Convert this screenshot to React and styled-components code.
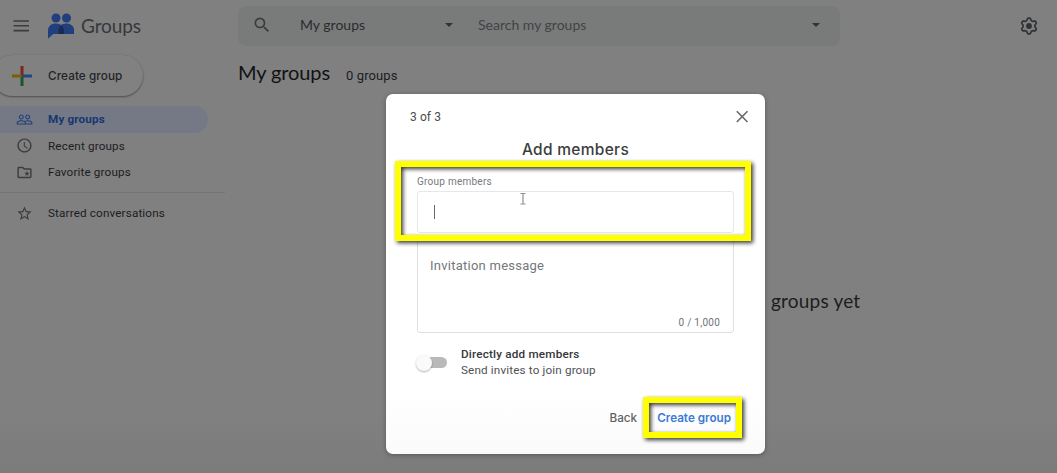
import React from "react";
import styled, { createGlobalStyle } from "styled-components";

const Global = createGlobalStyle`
  * { box-sizing: border-box; }
  html, body { margin: 0; padding: 0; overflow: hidden; background: #808080; }
  body { font-family: Roboto, "Liberation Sans", sans-serif; color: #202124; }
`;

const fonts = {
  display: `Lato, "Liberation Sans", sans-serif`,
  label: `Inter, "Liberation Sans", sans-serif`,
};

const Page = styled.div`
  position: relative;
  width: 1057px;
  height: 473px;
  overflow: hidden;
  display: flex;
  flex-direction: column;
  background: linear-gradient(#808080 88%, #7b7b7b);
`;

const Header = styled.header`
  flex: none;
  height: 51px;
  display: flex;
  align-items: center;
  padding: 0 18px 0 11px;
`;

const Icon = styled.svg`
  flex: none;
  display: block;
  width: ${(p) => p.$size}px;
  height: ${(p) => p.$h || p.$size}px;
  fill: ${(p) => p.$color || "#3a3c3f"};
`;

const Text = styled.span`
  display: block;
  white-space: nowrap;
  font-family: ${(p) => fonts[p.$face] || "inherit"};
  font-size: ${(p) => p.$size}px;
  line-height: ${(p) => p.$line || 20}px;
  font-weight: ${(p) => p.$weight || 400};
  letter-spacing: ${(p) => p.$track || 0}px;
  color: ${(p) => p.$color || "#1c1d1f"};
`;

const Brand = styled.div`
  width: 227px;
  display: flex;
  align-items: center;
`;

const Logo = styled(Icon)`
  margin: 0 7px 0 17px;
`;

const SearchBar = styled.div`
  width: 602px;
  height: 40px;
  border-radius: 8px;
  background: #797a7a;
  display: flex;
  align-items: center;
  padding: 0 14px 1px;
`;

const Scope = styled.div`
  width: 163px;
  margin: 0 15px 0 28px;
  display: flex;
  align-items: center;
  justify-content: space-between;
  padding-right: 10px;
`;

const Query = styled.div`
  flex: 1;
`;

const Caret = styled.i`
  border: 4px solid transparent;
  border-top-color: #303235;
  border-bottom: 0;
  margin-right: ${(p) => p.$right || 0}px;
`;

const Settings = styled.div`
  margin-left: auto;
`;

const Body = styled.div`
  flex: 1;
  display: flex;
`;

const Sidebar = styled.nav`
  width: 225px;
  padding-top: 4px;
`;

const ComposeButton = styled.div`
  width: 151px;
  height: 41px;
  margin: 0 0 10px -8px;
  border-radius: 21px;
  background: #818181;
  box-shadow: 0 1px 2px rgba(0, 0, 0, 0.38), 0 0 2px rgba(0, 0, 0, 0.08);
  display: flex;
  align-items: center;
  padding-left: 20px;
  gap: 16px;
`;

const NavItem = styled.div`
  width: 208px;
  height: 26.5px;
  border-radius: 0 14px 14px 0;
  background: ${(p) => (p.$active ? "#747985" : "transparent")};
  display: flex;
  align-items: center;
  padding-left: 16px;
  gap: 15px;
`;

const Divider = styled.div`
  height: 1px;
  margin: 6.500px 0 7px;
  background: #737474;
`;

const Main = styled.main`
  flex: 1;
  padding-left: 13px;
`;

const Heading = styled.div`
  display: flex;
  align-items: baseline;
  gap: 16px;
  padding-top: 8px;
`;

const Empty = styled.div`
  margin: 203px 0 0 533px;
`;

const Dialog = styled.section`
  position: absolute;
  left: 386px;
  top: 94px;
  width: 379px;
  height: 360px;
  border-radius: 7px;
  background: linear-gradient(#fff 82%, #fbfbfb);
  box-shadow: 0 1px 5px rgba(0, 0, 0, 0.3);
  padding: 14px 31px 0;
  display: flex;
  flex-direction: column;
`;

const DialogTop = styled.div`
  display: flex;
  align-items: center;
  justify-content: space-between;
  margin: 0 -15px 0 -7px;
  height: 18px;
`;

const DialogTitle = styled.div`
  display: flex;
  justify-content: center;
  margin: 14px 0 16px;
`;

const MemberInput = styled.div`
  height: 42px;
  margin-top: 3px;
  border: 1px solid #e6e7ea;
  border-radius: 3px;
  padding: 13px 16px;
`;

const InsertionPoint = styled.div`
  width: 1px;
  height: 14px;
  background: #66686b;
`;

const MessageBox = styled.div`
  height: 94px;
  margin-top: 6px;
  border: 1px solid #dfe0e3;
  border-radius: 3px;
  padding: 16px 13px 0 12px;
  display: flex;
  flex-direction: column;
  justify-content: space-between;
  align-items: flex-start;
`;

const Counter = styled.div`
  align-self: flex-end;
  margin-bottom: -1px;
`;

const SwitchRow = styled.div`
  display: flex;
  align-items: center;
  margin-top: 13px;
  gap: 14px;
`;

const Switch = styled.div`
  width: 30px;
  height: 17px;
  display: flex;
  align-items: center;
  &::before {
    content: "";
    width: 26px;
    height: 11px;
    margin-left: 4px;
    border-radius: 6px;
    background: #b9b9b9;
  }
  &::after {
    content: "";
    flex: none;
    width: 16px;
    height: 16px;
    margin-left: -31px;
    border-radius: 50%;
    background: #fafafa;
    box-shadow: 0 1px 2px rgba(0, 0, 0, 0.3);
  }
`;

const Actions = styled.div`
  display: flex;
  justify-content: flex-end;
  gap: 20px;
  margin: 29px 3px 0 0;
`;

const Highlight = styled.div`
  position: absolute;
  left: ${(p) => p.$x}px;
  top: ${(p) => p.$y}px;
  width: ${(p) => p.$w}px;
  height: ${(p) => p.$h}px;
  border: 6px solid #ffff00;
  filter: drop-shadow(2px 2px 2px rgba(0, 0, 0, 0.8));
`;

const Pointer = styled(Icon)`
  position: absolute;
  left: 519px;
  top: 192px;
`;

const navItems = [
  { label: "My groups", icon: "people", active: true },
  { label: "Recent groups", icon: "clock" },
  { label: "Favorite groups", icon: "folder" },
];

const paths = {
  people:
    "M16.5 13c-1.2 0-3.07.34-4.5 1-1.43-.67-3.3-1-4.5-1C5.33 13 1 14.08 1 16.25V19h22v-2.75c0-2.17-4.33-3.25-6.5-3.25zm-4 4.5h-10v-1.25c0-.54 2.56-1.75 5-1.75s5 1.21 5 1.75v1.25zm9 0H14v-1.25c0-.46-.2-.86-.52-1.22.88-.3 1.96-.53 3.02-.53 2.44 0 5 1.21 5 1.75v1.25zM7.5 12c1.93 0 3.5-1.57 3.5-3.5S9.43 5 7.5 5 4 6.57 4 8.5 5.57 12 7.5 12zm0-5.5c1.1 0 2 .9 2 2s-.9 2-2 2-2-.9-2-2 .9-2 2-2zm9 5.500c1.930 0 3.500-1.570 3.500-3.500S18.430 5 16.500 5 13 6.570 13 8.500s1.570 3.500 3.500 3.500zm0-5.500c1.100 0 2 .9 2 2s-.9 2-2 2-2-.9-2-2 .9-2 2-2z",
  clock:
    "M12 2C6.500 2 2 6.500 2 12s4.500 10 10 10 10-4.500 10-10S17.500 2 12 2zm0 18c-4.420 0-8-3.580-8-8s3.580-8 8-8 8 3.580 8 8-3.580 8-8 8zm.5-13H11v6l4.700 3.700 1-1.300-4.200-3.200z",
  folder:
    "M20 6h-8l-2-2H4c-1.100 0-2 .9-2 2v12c0 1.100.9 2 2 2h16c1.100 0 2-.9 2-2V8c0-1.100-.9-2-2-2zm0 12H4V6h5.200l2 2H20v10zm-6.900-1l2.400-1.800 2.400 1.800-.9-2.900L19.400 12.400h-2.900L15.500 9.500l-1 2.900h-2.900l2.400 1.700z",
  star:
    "M22 9.240l-7.190-.62L12 2 9.190 8.630 2 9.240l5.460 4.730L5.820 21 12 17.270 18.180 21l-1.630-7.030L22 9.240zM12 15.400l-3.760 2.270 1-4.280-3.320-2.880 4.380-.38L12 6.100l1.710 4.040 4.380.38-3.320 2.880 1 4.280L12 15.400z",
  search:
    "M15.500 14h-.79l-.28-.27A6.471 6.471 0 0 0 16 9.500 6.500 6.500 0 1 0 9.500 16c1.610 0 3.090-.59 4.230-1.570l.27.28v.79l5 4.990L20.490 19l-4.990-5zm-6 0C7.010 14 5 11.990 5 9.500S7.010 5 9.500 5 14 7.010 14 9.500 11.990 14 9.500 14z",
};

const gearOutline =
  "M" +
  Array.from({ length: 72 }, (_, i) => {
    const a = (i / 72) * Math.PI * 2;
    const r = 6.9 + 1.1 * Math.tanh(1.8 * Math.cos(6 * a));
    return `${(10 + r * Math.sin(a)).toFixed(2)} ${(10 - r * Math.cos(a)).toFixed(2)}`;
  }).join("L") +
  "Z";

const Glyph = ({ name, size, color }) => (
  <Icon viewBox="0 0 24 24" $size={size} $color={color}>
    <path d={paths[name]} />
  </Icon>
);

export default function App() {
  return (
    <Page>
      <Global />
      <Header>
        <Brand>
          <Icon viewBox="0 0 20 20" $size={20} $color="#3a3c3f">
            <path d="M2.500 4.200h15.500v1.600H2.500zM2.500 9h15.500v1.600H2.500zM2.500 13.800h15.500v1.600H2.500z" />
          </Icon>
          <Logo viewBox="0 0 26 26" $size={26}>
            <circle cx="8" cy="5" r="4.500" fill="#203f7c" />
            <circle cx="18.500" cy="5" r="4.500" fill="#203f7c" />
            <path d="M0 25.800V18C0 13 3 10.500 8 10.500s8 3 8 7.500V21H5.200z" fill="#203f7c" />
            <path d="M10.500 21V18c0-4.800 3-7.500 7.700-7.500S26.300 13.400 26.300 18v3z" fill="#203f7c" />
            <path d="M10.500 21V18c0-2 .8-3.800 2.600-5.400 2 1.300 2.900 3.400 2.900 5.400v3z" fill="#172b59" />
          </Logo>
          <Text $face="display" $size={19} $track={-0.1} $color="#36383b">Groups</Text>
        </Brand>
        <SearchBar>
          <Glyph name="search" size={20} />
          <Scope>
            <Text $face="display" $size={14} $color="#2a2c2e">My groups</Text>
            <Caret />
          </Scope>
          <Query>
            <Text $face="display" $size={14} $color="#414346">Search my groups</Text>
          </Query>
          <Caret $right={6} />
        </SearchBar>
        <Settings>
          <Icon viewBox="0 0 20 20" $size={20}>
            <path d={gearOutline} fill="none" stroke="#303235" strokeWidth="1.700" strokeLinejoin="round" />
            <circle cx="10" cy="10" r="2.900" fill="#303235" />
          </Icon>
        </Settings>
      </Header>
      <Body>
        <Sidebar>
          <ComposeButton>
            <Icon viewBox="0 0 20 20" $size={20}>
              <path d="M8.500 0h3v10h-3z" fill="#80251e" />
              <path d="M0 8.500h10l-1.500 3H0z" fill="#7c5d08" />
              <path d="M10 8.500h10v3H10z" fill="#234685" />
              <path d="M8.500 11.500L11.500 8.500V20h-3z" fill="#1c552c" />
            </Icon>
            <Text $face="label" $size={11.700} $weight={500} $track={0.1} $color="#222426">Create group</Text>
          </ComposeButton>
          {navItems.map((n) => (
            <NavItem key={n.label} $active={n.active}>
              <Glyph name={n.icon} size={17} color={n.active ? "#203f78" : undefined} />
              <Text
                $size={11.700}
                $weight={n.active ? 700 : 400}
                $track={0.15}
                $color={n.active ? "#17366f" : undefined}
              >
                {n.label}
              </Text>
            </NavItem>
          ))}
          <Divider />
          <NavItem>
            <Glyph name="star" size={17} />
            <Text $size={11.700} $track={0.15}>Starred conversations</Text>
          </NavItem>
        </Sidebar>
        <Main>
          <Heading>
            <Text $face="display" $size={20} $line={26} $track={-0.1} $color="#111213">My groups</Text>
            <Text $size={13} $track={0.1}>0 groups</Text>
          </Heading>
          <Empty>
            <Text $face="display" $size={19} $line={24} $track={0.2}>groups yet</Text>
          </Empty>
        </Main>
      </Body>
      <Dialog>
        <DialogTop>
          <Text $size={12} $line={16} $track={0.1} $color="#4a4c50">
            3 of 3
          </Text>
          <Icon viewBox="0 0 14 14" $size={14}>
            <path d="M1.800 1.300l10.700 10.700m0-10.700L1.800 12" stroke="#66686c" strokeWidth="1.600" />
          </Icon>
        </DialogTop>
        <DialogTitle>
          <Text $face="label" $size={15.500} $line={20} $weight={500} $track={0.3} $color="#3c3d40">Add members</Text>
        </DialogTitle>
        <Text $size={10} $line={12} $track={0.25} $color="#77797d">Group members</Text>
        <MemberInput>
          <InsertionPoint />
        </MemberInput>
        <MessageBox>
          <Text $size={13} $line={20} $track={0.25} $color="#75777b">Invitation message</Text>
          <Counter>
            <Text $size={10} $track={0.25} $color="#707276">0 / 1,000</Text>
          </Counter>
        </MessageBox>
        <SwitchRow>
          <Switch />
          <div>
            <Text $size={11.700} $line={16} $weight={500} $track={0.2} $color="#35373a">Directly add members</Text>
            <Text $size={11.700} $line={17} $track={0.15} $color="#505256">Send invites to join group</Text>
          </div>
        </SwitchRow>
        <Actions>
          <Text $face="label" $size={11.700} $weight={500} $color="#5f6165">Back</Text>
          <Text $face="label" $size={11.700} $weight={600} $color="#3b7bd4">Create group</Text>
        </Actions>
      </Dialog>
      <Pointer viewBox="0 0 8 14" $size={8} $h={14}>
        <path d="M1.500 1.500h5M1.500 12h5M4 1.500v10.500" fill="none" stroke="#909194" strokeWidth="1.200" />
      </Pointer>
      <Highlight $x={395} $y={161} $w={356} $h={80} />
      <Highlight $x={643} $y={397} $w={99} $h={41} />
    </Page>
  );
}
